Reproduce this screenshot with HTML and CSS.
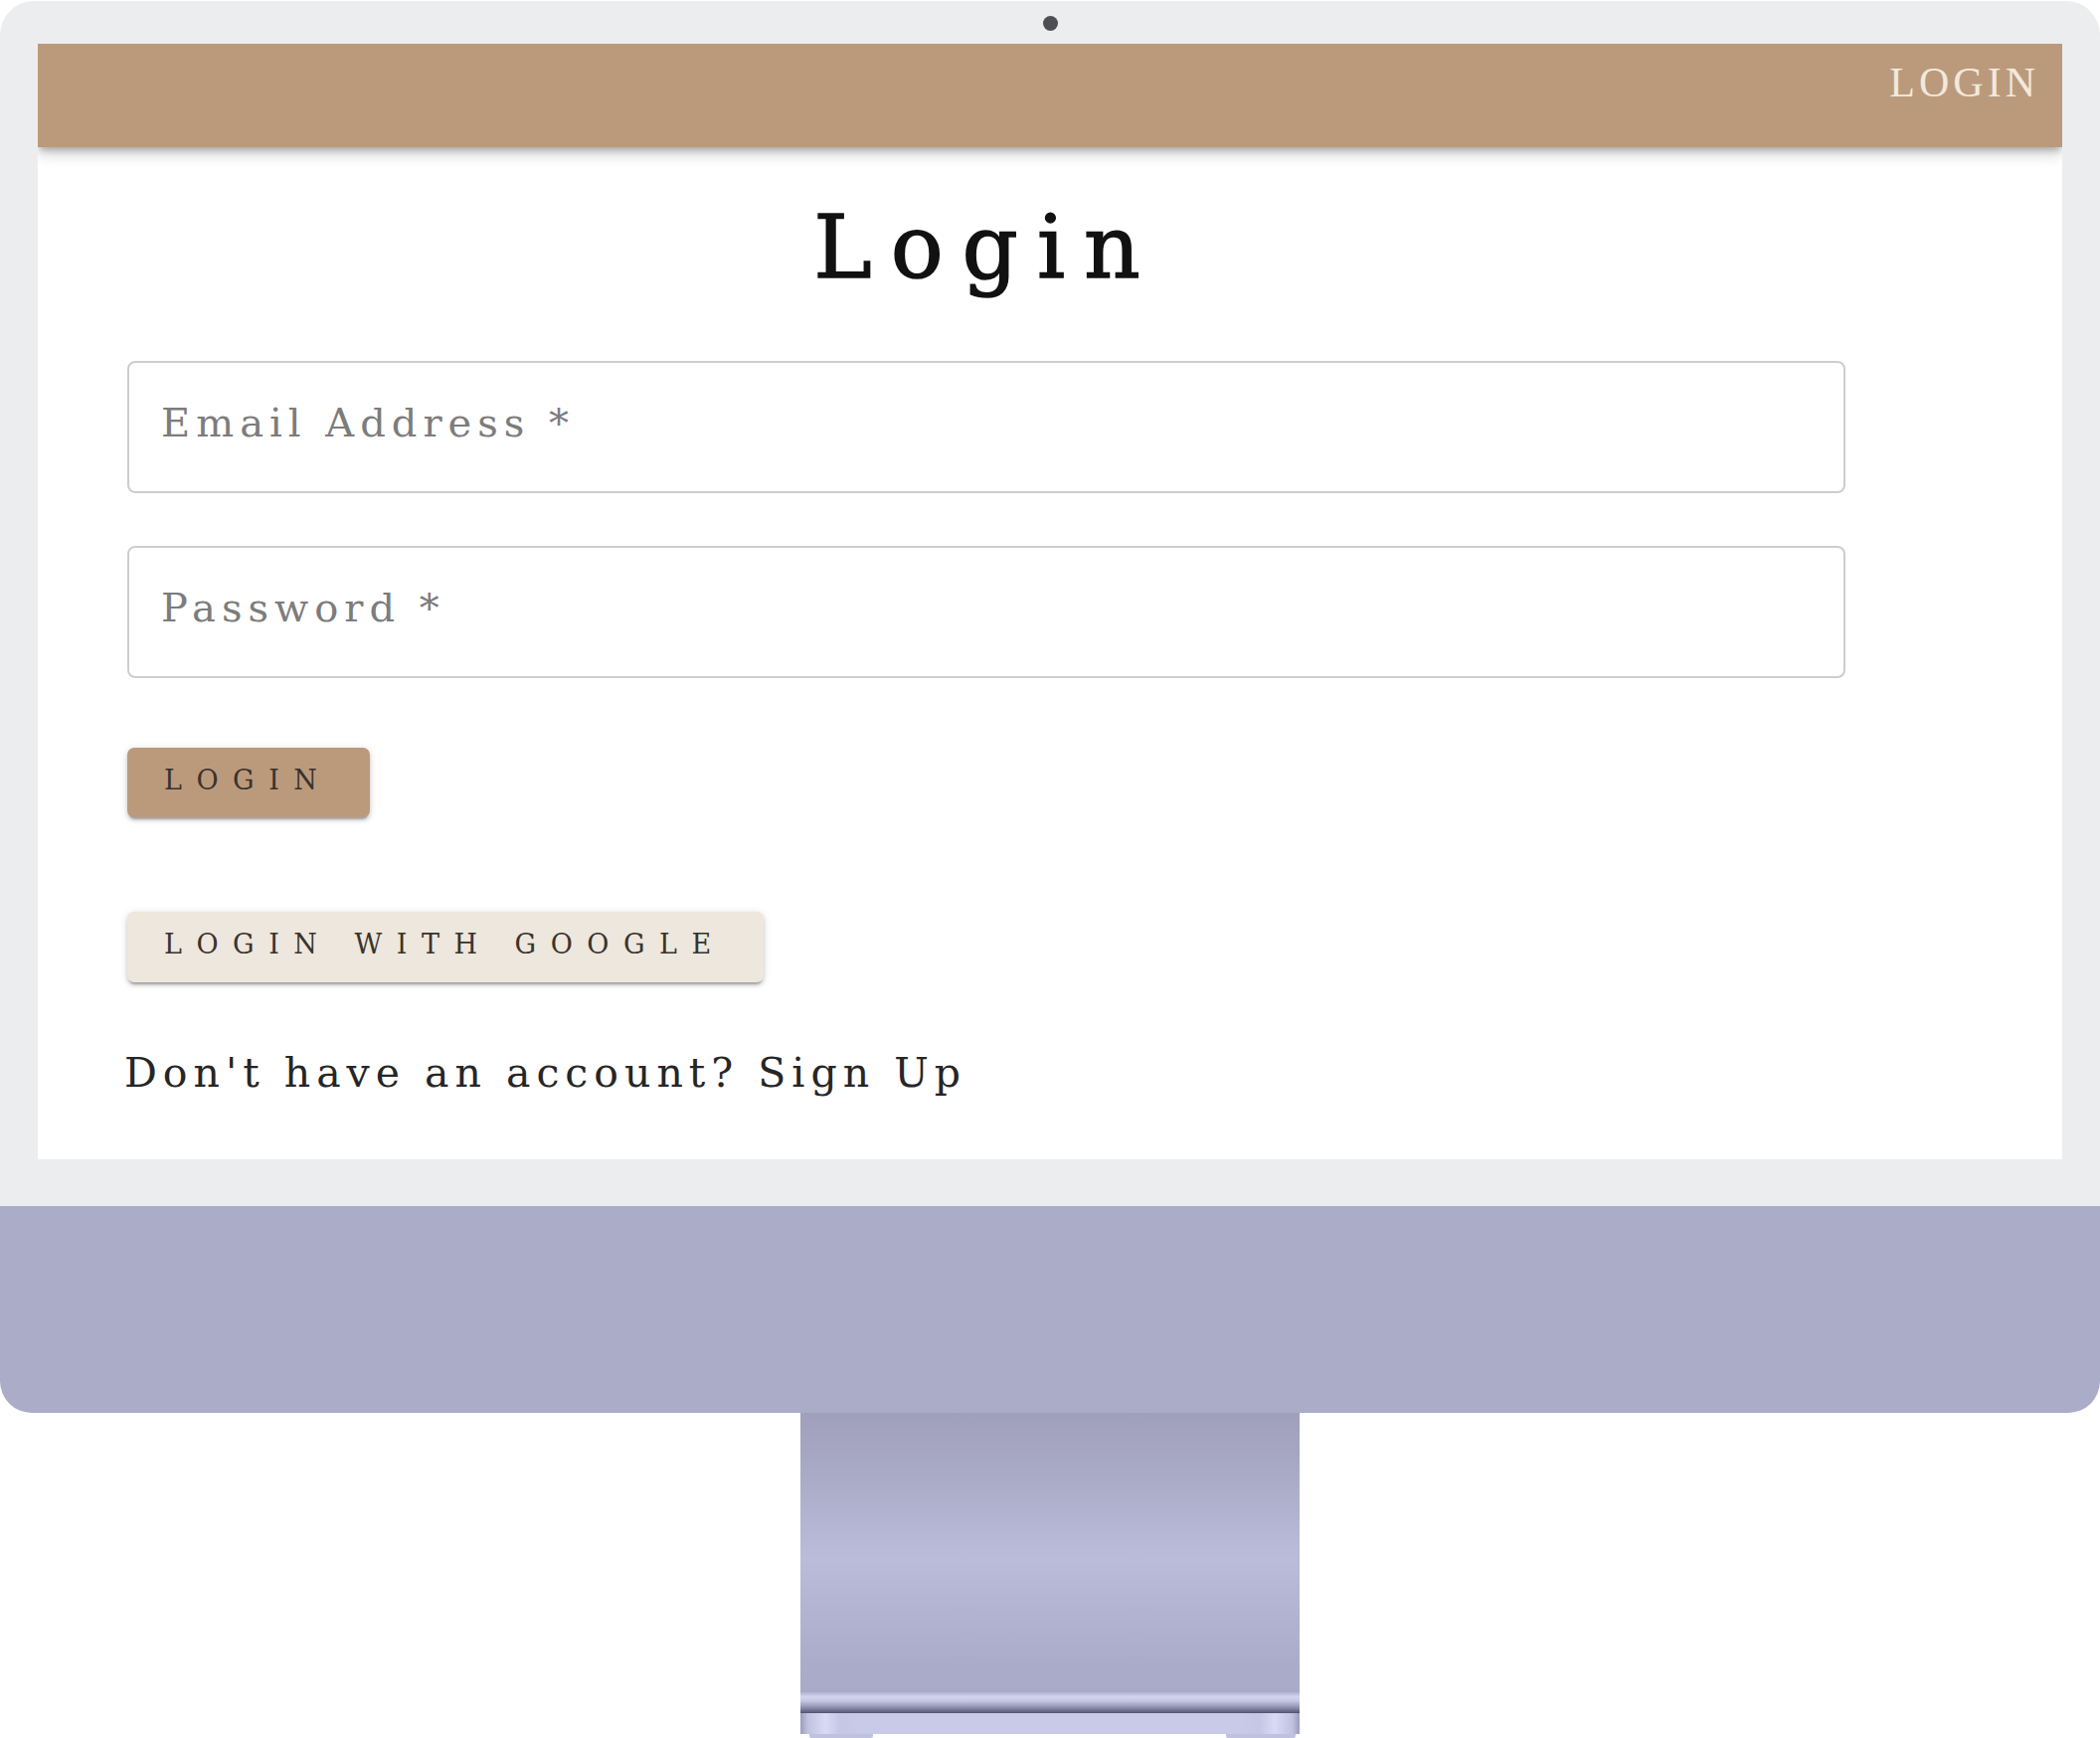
FILE: index.html
```html
<!DOCTYPE html>
<html lang="en">
<head>
<meta charset="utf-8">
<title>Login</title>
<link rel="stylesheet" href="styles.css">
</head>
<body>
<div class="imac">
  <div class="bezel">
    <div class="camera"></div>
    <div class="screen">
      <header class="appbar">
        <a class="nav-link" href="#">LOGIN</a>
      </header>
      <main class="content">
        <form class="form">
          <h1 class="title">Login</h1>
          <div class="field"><input class="input" type="email" placeholder="Email Address *"></div>
          <div class="field"><input class="input" type="password" placeholder="Password *"></div>
          <div class="actions">
            <button class="btn btn-primary" type="button">Login</button>
            <button class="btn btn-google" type="button">Login with Google</button>
          </div>
          <p class="signup">Don't have an account? Sign Up</p>
        </form>
      </main>
    </div>
  </div>
  <div class="chin"></div>
  <div class="stand">
    <div class="stand-body"></div>
    <div class="stand-lip"></div>
    <div class="stand-foot"></div>
    <div class="stand-feet"><span class="foot"></span><span class="foot"></span></div>
  </div>
</div>
</body>
</html>
```

FILE: styles.css
```css
html, body {
  margin: 0;
  padding: 0;
  background: #ffffff;
}

.imac {
  width: 2112px;
  display: flex;
  flex-direction: column;
}

.bezel {
  background: #ecedef;
  border-radius: 34px 34px 0 0;
  padding: 15px 38px 47px 38px;
  margin-top: 1px;
}

.camera {
  width: 15px;
  height: 15px;
  border-radius: 50%;
  background: #4d4f55;
  margin: 0 auto 13px auto;
}

.screen {
  background: #ffffff;
  height: 1122px;
  display: flex;
  flex-direction: column;
  overflow: hidden;
}

.appbar {
  height: 104px;
  flex: 0 0 104px;
  background: #bb9a7c;
  display: flex;
  justify-content: flex-end;
  align-items: flex-start;
  padding-right: 23px;
  box-shadow: 0 5px 6px -2px rgba(0,0,0,0.22), 0 8px 12px 0 rgba(0,0,0,0.12), 0 2px 22px 0 rgba(0,0,0,0.08);
  position: relative;
  z-index: 1;
}

.nav-link {
  font-family: "Liberation Serif", serif;
  font-size: 42px;
  letter-spacing: 4px;
  color: #f2e9dd;
  text-decoration: none;
  line-height: 1;
  margin-top: 18px;
}

.content {
  padding-left: 90px;
}

.form {
  width: 1728px;
  display: flex;
  flex-direction: column;
}

.title {
  font-family: "DejaVu Serif", serif;
  font-weight: normal;
  font-size: 88px;
  line-height: 1;
  letter-spacing: 19px;
  text-align: center;
  margin: 57px 0 0 0;
  color: #111111;
  -webkit-text-stroke: 1.5px #111111;
}

.field:first-of-type {
  margin-top: 70px;
}

.field + .field {
  margin-top: 53px;
}

.input {
  box-sizing: border-box;
  width: 100%;
  height: 133px;
  border: 2px solid #cdcdcd;
  border-radius: 8px;
  padding: 0 32px 10px 32px;
  font-family: "DejaVu Serif", serif;
  font-size: 40px;
  letter-spacing: 6px;
  color: #333;
  background: #fff;
  outline: none;
}

.input::placeholder {
  color: #7c7c7c;
  opacity: 1;
}

.actions {
  display: flex;
  flex-direction: column;
  align-items: flex-start;
  gap: 95px;
  margin-top: 70px;
}

.btn {
  font-family: "DejaVu Serif", serif;
  font-size: 27px;
  letter-spacing: 14.5px;
  text-transform: uppercase;
  text-align: left;
  color: #3a332c;
  border: none;
  border-radius: 7px;
  height: 70px;
  padding: 0 10px 6px 37px;
  box-shadow: 0 4px 2px -2px rgba(0,0,0,0.22), 0 3px 4px 0 rgba(0,0,0,0.14), 0 1px 8px 0 rgba(0,0,0,0.12);
  cursor: pointer;
  line-height: 1;
}

.btn-primary {
  background: #bb9a7c;
  width: 244px;
}

.btn-google {
  background: #ede7dd;
  width: 640px;
  height: 71px;
}

.signup {
  font-family: "DejaVu Serif", serif;
  font-size: 41px;
  letter-spacing: 6px;
  color: #262626;
  margin: 71px 0 0 -3px;
  line-height: 1;
}

.chin {
  height: 208px;
  background: #abacc8;
  border-radius: 0 0 32px 32px;
}

.stand {
  width: 502px;
  margin: 0 auto;
  display: flex;
  flex-direction: column;
}

.stand-body {
  height: 281px;
  background: linear-gradient(180deg, #a09fbc 0%, #abacc8 25%, #b7b8d5 45%, #bbbcd9 52%, #b3b4d1 70%, #abacc9 90%, #a9aac7 100%);
}

.stand-lip {
  height: 21px;
  background: linear-gradient(180deg, #b2b3d0 0%, #d3d4ee 22%, #c6c7e2 40%, #a3a4c2 62%, #7b7c9c 82%, #50516f 100%);
}

.stand-foot {
  height: 21px;
  background: linear-gradient(90deg, #9c9dbd 0%, #c1c2e0 1.5%, #d9daf4 5%, #c6c7e5 8%, #c9cae8 12%, #c9cae8 88%, #c6c7e5 92%, #d9daf4 95%, #c1c2e0 98.5%, #9c9dbd 100%);
}

.stand-feet {
  display: flex;
  justify-content: space-between;
  padding: 0 4px 0 9px;
}

.foot {
  display: block;
  width: 64px;
  height: 4px;
  background: #c0c1df;
  border-radius: 0 0 2px 2px;
}

.foot:last-child {
  width: 70px;
}
```
